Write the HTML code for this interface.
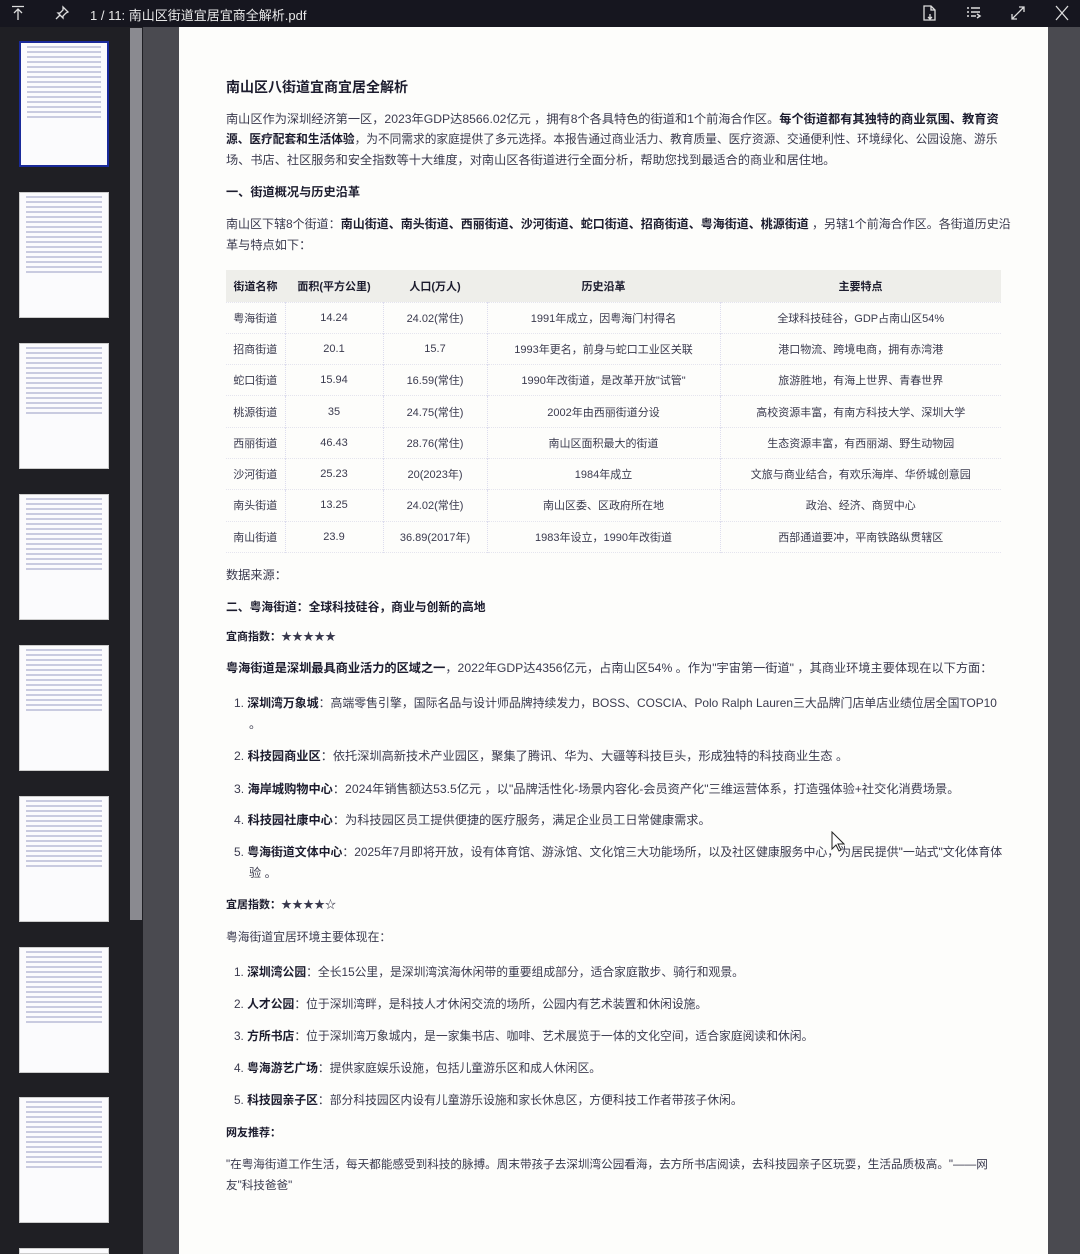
<!DOCTYPE html>
<html><head><meta charset="utf-8"><style>
*{margin:0;padding:0;box-sizing:border-box}
html,body{width:1080px;height:1254px;overflow:hidden}
body{background:#4a4a50;font-family:"Liberation Sans","Noto Sans CJK SC",sans-serif;position:relative}
#top{position:absolute;left:0;top:0;width:1080px;height:27px;background:#16161f;color:#e8e8e8;font-size:13px}
#side{position:absolute;left:0;top:27px;width:143px;height:1227px;background:#1f1f24;overflow:hidden}
.th{position:absolute;left:19px;width:90px;height:126px;background:#fbfbfd;border:1px solid #ccc;overflow:hidden}
.th i{display:block;height:2px;margin:3px 6px 0;background:#c9cbe0}
#sb{position:absolute;left:130px;top:28px;width:12px;height:892px;background:#8a8a90}
#page{position:absolute;left:179px;top:27px;width:869px;height:1227px;background:#fdfdfb}
.l{position:absolute;white-space:nowrap;font-size:12.2px;color:#3a3a4e;line-height:18px}
b{color:#1c1c2e;font-weight:bold}
.s{font-size:11px}
.m{font-size:11.8px}
table{position:absolute;left:226px;top:270px;width:775px;border-collapse:collapse;font-size:11px;color:#3a3a4e}
th{height:32px;background:#eeeeea;font-weight:bold;color:#1c1c2e}
td{height:31.3px;text-align:center;border-left:1px dotted #dde}
td:first-child{border-left:none}
tr{border-bottom:1px dotted #e4e4ee}
</style></head><body>
<div id="top">
<svg style="position:absolute;left:10px;top:5px" width="16" height="16" fill="none" stroke="#ddd" stroke-width="1.3"><path d="M2 1.5h12M8 4v11M4 8l4-4 4 4"/></svg>
<svg style="position:absolute;left:54px;top:5px" width="16" height="16" fill="none" stroke="#ddd" stroke-width="1.3"><path d="M9 2l5 5-2 1-3 3 0 2-5-5 2 0 3-3zM6 10l-4 4"/></svg>
<span style="position:absolute;left:90px;top:5px">1 / 11: 南山区街道宜居宜商全解析.pdf</span>
<svg style="position:absolute;left:922px;top:4px" width="16" height="18" fill="none" stroke="#ddd" stroke-width="1.3"><path d="M2 2h7l4 4v10H2zM9 2v4h4M8 10v5M6 13l2 2 2-2"/></svg>
<svg style="position:absolute;left:966px;top:4px" width="16" height="18" fill="none" stroke="#ddd" stroke-width="1.5"><path d="M1 4h2M5 4h9M1 8h2M5 8h9M1 12h2M5 12h5M11 14l3-2-3-2"/></svg>
<svg style="position:absolute;left:1010px;top:4px" width="16" height="18" fill="none" stroke="#ddd" stroke-width="1.3"><path d="M2 15L14 3M9 3h5v5M2 10v5h5"/></svg>
<svg style="position:absolute;left:1054px;top:4px" width="16" height="18" fill="none" stroke="#ddd" stroke-width="1.3"><path d="M2 2l12 14M14 2L2 16"/></svg>
</div>
<div id="side">
<div class="th" style="top:14px;border:2px solid #1a2a9a"><i></i><i></i><i></i><i></i><i></i><i></i><i></i><i></i><i></i><i></i><i></i><i></i><i></i><i></i><i></i></div>
<div class="th" style="top:165px"><i></i><i></i><i></i><i></i><i></i><i></i><i></i><i></i><i></i><i></i><i></i><i></i><i></i><i></i><i></i><i></i></div>
<div class="th" style="top:316px"><i></i><i></i><i></i><i></i><i></i><i></i><i></i><i></i><i></i><i></i><i></i><i></i><i></i><i></i></div>
<div class="th" style="top:467px"><i></i><i></i><i></i><i></i><i></i><i></i><i></i><i></i><i></i><i></i><i></i><i></i><i></i><i></i><i></i></div>
<div class="th" style="top:618px"><i></i><i></i><i></i><i></i><i></i><i></i><i></i><i></i><i></i><i></i><i></i><i></i><i></i></div>
<div class="th" style="top:769px"><i></i><i></i><i></i><i></i><i></i><i></i><i></i><i></i><i></i><i></i><i></i><i></i><i></i><i></i></div>
<div class="th" style="top:920px"><i></i><i></i><i></i><i></i><i></i><i></i><i></i><i></i><i></i><i></i><i></i><i></i><i></i><i></i><i></i></div>
<div class="th" style="top:1070px"><i></i><i></i><i></i><i></i><i></i><i></i><i></i><i></i><i></i><i></i><i></i><i></i><i></i><i></i></div>
<div class="th" style="top:1221px;height:6px"></div>
</div>
<div id="sb"></div>
<div id="page"></div>

<div class="l" style="left:226px;top:78px;font-size:14px;font-weight:bold;color:#1c1c2e">南山区八街道宜商宜居全解析</div>
<div class="l" style="left:226px;top:110px">南山区作为深圳经济第一区，2023年GDP达8566.02亿元 ，拥有8个各具特色的街道和1个前海合作区。<b>每个街道都有其独特的商业氛围、教育资</b></div>
<div class="l" style="left:226px;top:131px;font-size:11.7px"><b>源、医疗配套和生活体验</b>，为不同需求的家庭提供了多元选择。本报告通过商业活力、教育质量、医疗资源、交通便利性、环境绿化、公园设施、游乐</div>
<div class="l" style="left:226px;top:151px">场、书店、社区服务和安全指数等十大维度，对南山区各街道进行全面分析，帮助您找到最适合的商业和居住地。</div>
<div class="l" style="left:226px;top:183px"><b>一、街道概况与历史沿革</b></div>
<div class="l" style="left:226px;top:215px;font-size:12px">南山区下辖8个街道：<b>南山街道、南头街道、西丽街道、沙河街道、蛇口街道、招商街道、粤海街道、桃源街道</b> ，另辖1个前海合作区。各街道历史沿</div>
<div class="l" style="left:226px;top:236px">革与特点如下：</div>

<table>
<colgroup><col style="width:59px"><col style="width:98px"><col style="width:104px"><col style="width:233px"><col></colgroup>
<tr><th>街道名称</th><th>面积(平方公里)</th><th>人口(万人)</th><th>历史沿革</th><th>主要特点</th></tr>
<tr><td>粤海街道</td><td>14.24</td><td>24.02(常住)</td><td>1991年成立，因粤海门村得名</td><td>全球科技硅谷，GDP占南山区54%</td></tr>
<tr><td>招商街道</td><td>20.1</td><td>15.7</td><td>1993年更名，前身与蛇口工业区关联</td><td>港口物流、跨境电商，拥有赤湾港</td></tr>
<tr><td>蛇口街道</td><td>15.94</td><td>16.59(常住)</td><td>1990年改街道，是改革开放"试管"</td><td>旅游胜地，有海上世界、青春世界</td></tr>
<tr><td>桃源街道</td><td>35</td><td>24.75(常住)</td><td>2002年由西丽街道分设</td><td>高校资源丰富，有南方科技大学、深圳大学</td></tr>
<tr><td>西丽街道</td><td>46.43</td><td>28.76(常住)</td><td>南山区面积最大的街道</td><td>生态资源丰富，有西丽湖、野生动物园</td></tr>
<tr><td>沙河街道</td><td>25.23</td><td>20(2023年)</td><td>1984年成立</td><td>文旅与商业结合，有欢乐海岸、华侨城创意园</td></tr>
<tr><td>南头街道</td><td>13.25</td><td>24.02(常住)</td><td>南山区委、区政府所在地</td><td>政治、经济、商贸中心</td></tr>
<tr><td>南山街道</td><td>23.9</td><td>36.89(2017年)</td><td>1983年设立，1990年改街道</td><td>西部通道要冲，平南铁路纵贯辖区</td></tr>
</table>

<div class="l" style="left:226px;top:566px">数据来源：</div>
<div class="l" style="left:226px;top:598px;font-size:11.8px"><b>二、粤海街道：全球科技硅谷，商业与创新的高地</b></div>
<div class="l s" style="left:226px;top:628px"><b>宜商指数：</b>★★★★★</div>
<div class="l" style="left:226px;top:659px"><b>粤海街道是深圳最具商业活力的区域之一</b>，2022年GDP达4356亿元，占南山区54% 。作为"宇宙第一街道" ，其商业环境主要体现在以下方面：</div>
<div class="l" style="left:234px;top:694px;font-size:11.9px">1. <b>深圳湾万象城</b>：高端零售引擎，国际名品与设计师品牌持续发力，BOSS、COSCIA、Polo Ralph Lauren三大品牌门店单店业绩位居全国TOP10</div>
<div class="l" style="left:249px;top:715px">。</div>
<div class="l" style="left:234px;top:747px">2. <b>科技园商业区</b>：依托深圳高新技术产业园区，聚集了腾讯、华为、大疆等科技巨头，形成独特的科技商业生态 。</div>
<div class="l" style="left:234px;top:780px">3. <b>海岸城购物中心</b>：2024年销售额达53.5亿元 ，以"品牌活性化-场景内容化-会员资产化"三维运营体系，打造强体验+社交化消费场景。</div>
<div class="l" style="left:234px;top:811px">4. <b>科技园社康中心</b>：为科技园区员工提供便捷的医疗服务，满足企业员工日常健康需求。</div>
<div class="l" style="left:234px;top:843px;font-size:11.9px">5. <b>粤海街道文体中心</b>：2025年7月即将开放，设有体育馆、游泳馆、文化馆三大功能场所，以及社区健康服务中心，为居民提供"一站式"文化体育体</div>
<div class="l" style="left:249px;top:864px">验 。</div>
<div class="l s" style="left:226px;top:896px"><b>宜居指数：</b>★★★★☆</div>
<div class="l m" style="left:226px;top:928px">粤海街道宜居环境主要体现在：</div>
<div class="l m" style="left:234px;top:963px">1. <b>深圳湾公园</b>：全长15公里，是深圳湾滨海休闲带的重要组成部分，适合家庭散步、骑行和观景。</div>
<div class="l m" style="left:234px;top:995px">2. <b>人才公园</b>：位于深圳湾畔，是科技人才休闲交流的场所，公园内有艺术装置和休闲设施。</div>
<div class="l m" style="left:234px;top:1027px">3. <b>方所书店</b>：位于深圳湾万象城内，是一家集书店、咖啡、艺术展览于一体的文化空间，适合家庭阅读和休闲。</div>
<div class="l m" style="left:234px;top:1059px">4. <b>粤海游艺广场</b>：提供家庭娱乐设施，包括儿童游乐区和成人休闲区。</div>
<div class="l m" style="left:234px;top:1091px">5. <b>科技园亲子区</b>：部分科技园区内设有儿童游乐设施和家长休息区，方便科技工作者带孩子休闲。</div>
<div class="l s" style="left:226px;top:1124px"><b>网友推荐：</b></div>
<div class="l" style="left:226px;top:1156px;font-size:11.6px">"在粤海街道工作生活，每天都能感受到科技的脉搏。周末带孩子去深圳湾公园看海，去方所书店阅读，去科技园亲子区玩耍，生活品质极高。"——网</div>
<div class="l" style="left:226px;top:1177px;font-size:11.6px">友"科技爸爸"</div>
<svg style="position:absolute;left:831px;top:831px" width="14" height="22"><path d="M1 1v17l4-4 3 6 2-1-3-6h6z" fill="#fff" stroke="#222"/></svg>
</body></html>
